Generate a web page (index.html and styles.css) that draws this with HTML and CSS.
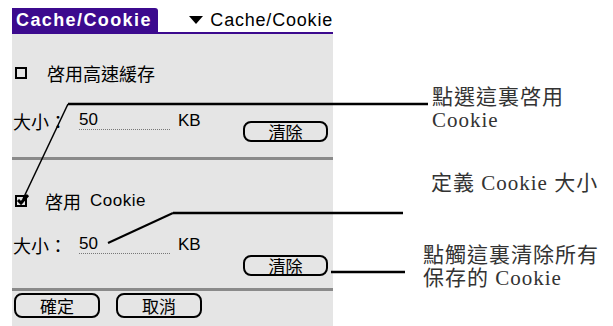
FILE: index.html
```html
<!DOCTYPE html>
<html>
    <head>
        <title>Cache/Cookie</title>
        <link rel="stylesheet" href="styles.css">
    </head>
    <body>
        <div id="Page">
            <div id="Device">
                <div id="TitleBar">
                    <div class="Tab">Cache/Cookie</div>
                    <div class="Menu"><span class="Arrow"></span>Cache/Cookie</div>
                </div>
                <div id="Screen">
                    <div class="Section" id="CacheSection">
                        <div class="CheckRow">
                            <span class="Box"></span>
                            <span class="Cjk">啓用高速緩存</span>
                        </div>
                        <div class="SizeRow">
                            <span class="Cjk">大小：</span>
                            <span class="Field">50</span>
                            <span class="Unit">KB</span>
                            <span class="Btn">清除</span>
                        </div>
                    </div>
                    <div class="Rule"></div>
                    <div class="Section" id="CookieSection">
                        <div class="CheckRow">
                            <svg class="Tick" width="14" height="14" viewBox="0 0 14 14">
                                <rect x="1" y="3" width="10" height="10" fill="none" stroke="#000" stroke-width="2"/>
                                <path d="M3 7 L6 10 L13 2" fill="none" stroke="#000" stroke-width="3"/>
                            </svg>
                            <span class="Cjk">啓用</span>
                            <span class="Latin">Cookie</span>
                        </div>
                        <div class="SizeRow">
                            <span class="Cjk">大小：</span>
                            <span class="Field">50</span>
                            <span class="Unit">KB</span>
                            <span class="Btn">清除</span>
                        </div>
                    </div>
                    <div class="Rule"></div>
                    <div id="Footer">
                        <span class="Btn">確定</span>
                        <span class="Btn">取消</span>
                    </div>
                </div>
            </div>
            <div id="Notes">
                <p class="Note" id="NoteEnable">點選這裏啓用<br>Cookie</p>
                <p class="Note" id="NoteSize">定義 Cookie 大小</p>
                <p class="Note" id="NoteClear">點觸這裏清除所有<br>保存的 Cookie</p>
            </div>
            <!-- leader lines from the notes to the controls -->
            <svg id="Leaders" width="613" height="326">
                <polyline points="23,199 68,104" fill="none" stroke="#000" stroke-width="1.5"/>
                <line x1="68" y1="104" x2="428" y2="104" stroke="#000" stroke-width="2.5"/>
                <polyline points="108,243 173,213" fill="none" stroke="#000" stroke-width="2"/>
                <line x1="173" y1="213" x2="403" y2="213" stroke="#000" stroke-width="2.5"/>
                <line x1="331" y1="272" x2="405" y2="272" stroke="#000" stroke-width="2.5"/>
            </svg>
        </div>
    </body>
</html>
```

FILE: styles.css
```css
body{
    margin: 0;
    background-color: white;
}

#Page{
    position: relative;
    width: 613px;
    height: 326px;
    display: flex;
    flex-direction: row;
}

#Device{
    width: 321px;
    margin-left: 12px;
    margin-top: 8px;
    display: flex;
    flex-direction: column;
}

#TitleBar{
    height: 24px;
    border-bottom: 2px solid #3c0a8e;
    display: flex;
    flex-direction: row;
    align-items: stretch;
}

.Tab{
    width: 146px;
    background-color: #3c0a8e;
    color: white;
    font-family: 'Liberation Sans', sans-serif;
    font-weight: bold;
    font-size: 18px;
    letter-spacing: 1.4px;
    line-height: 24px;
    padding-left: 4px;
    box-sizing: border-box;
    border-top-right-radius: 3px;
}

.Menu{
    flex: 1;
    font-family: 'Liberation Sans', sans-serif;
    font-size: 18px;
    letter-spacing: 0.8px;
    line-height: 24px;
    display: flex;
    justify-content: flex-end;
    align-items: center;
}

.Arrow{
    width: 0;
    height: 0;
    border-left: 7px solid transparent;
    border-right: 7px solid transparent;
    border-top: 8px solid black;
    margin-right: 7px;
}

#Screen{
    flex: 1;
    background-color: #e5e5e5;
    display: flex;
    flex-direction: column;
}

.Section{
    display: flex;
    flex-direction: column;
}

#CacheSection{
    padding-top: 28px;
    padding-bottom: 15px;
}

#CookieSection{
    padding-top: 30px;
    padding-bottom: 12px;
}

.Cjk{
    font-family: 'Noto Sans CJK TC', sans-serif;
    font-size: 18px;
    line-height: 22px;
}

.Latin, .Unit, .Field{
    font-family: 'Liberation Sans', sans-serif;
    font-size: 17px;
    line-height: 22px;
}

.CheckRow{
    height: 22px;
    display: flex;
    align-items: center;
    padding-left: 3px;
}

.Box{
    width: 8px;
    height: 8px;
    border: 2px solid black;
    margin-right: 20px;
}

.Tick{
    margin-right: 16px;
    margin-top: -2px;
}

.CheckRow .Latin{
    margin-left: 9px;
    font-size: 17px;
    letter-spacing: 0.5px;
}

.SizeRow{
    display: flex;
    align-items: flex-start;
    padding-left: 1px;
    padding-right: 5px;
}

#CacheSection .SizeRow{
    margin-top: 26px;
}

#CookieSection .SizeRow{
    margin-top: 22px;
}

.Field{
    width: 91px;
    margin-left: 12px;
    border-bottom: 1px dotted #777;
    line-height: 19px;
}

.Unit{
    margin-left: 8px;
}

.Btn{
    width: 85px;
    height: 21px;
    box-sizing: border-box;
    border: 2px solid black;
    border-radius: 8px;
    font-family: 'Noto Sans CJK TC', sans-serif;
    font-size: 17px;
    line-height: 17px;
    display: flex;
    justify-content: center;
    align-items: center;
}

.SizeRow .Btn{
    margin-left: auto;
}

#CacheSection .Btn{
    margin-top: 11px;
}

#CookieSection .Btn{
    margin-top: 21px;
}

.Rule{
    height: 3px;
    background-color: #8a8a8a;
}

#Footer{
    display: flex;
    flex-direction: row;
    gap: 16px;
    padding-top: 2px;
    padding-left: 2px;
}

#Footer .Btn{
    height: 25px;
    width: 86px;
}

#Notes{
    flex: 1;
    display: flex;
    flex-direction: column;
    padding-top: 86px;
}

.Note{
    margin: 0;
    font-family: 'Liberation Serif', 'Noto Sans CJK TC', serif;
    font-size: 21px;
    letter-spacing: 1px;
    line-height: 23px;
    color: #333;
    white-space: nowrap;
}

#NoteEnable{
    margin-left: 99px;
}

#NoteSize{
    margin-left: 98px;
    margin-top: 40px;
}

#NoteClear{
    margin-left: 90px;
    margin-top: 49px;
}

#Leaders{
    position: absolute;
    top: 0;
    left: 0;
}
```
